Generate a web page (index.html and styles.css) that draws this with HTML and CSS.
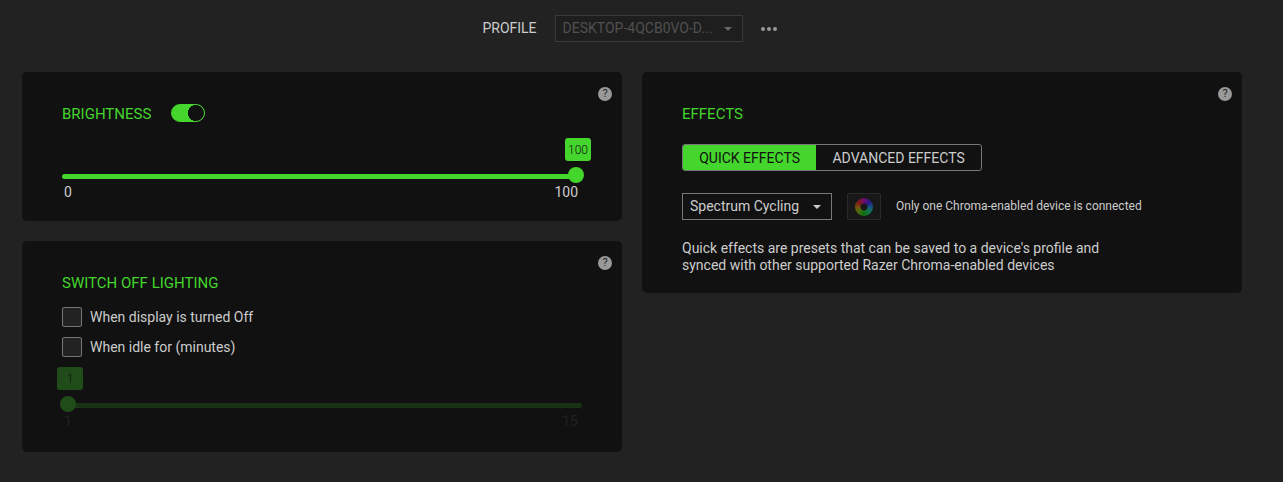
FILE: index.html
```html
<!DOCTYPE html>
<html lang="en">
<head>
<meta charset="utf-8">
<title>Lighting</title>
<link rel="stylesheet" href="styles.css">
</head>
<body>
<header class="profile-bar">
  <label for="profile">PROFILE</label>
  <div class="select profile-select">
    <select id="profile" disabled><option>DESKTOP-4QCB0VO-D...</option></select>
    <svg class="caret" viewBox="0 0 8 4" aria-hidden="true"><path d="M0 0h8L4 4z"/></svg>
  </div>
  <button class="more" type="button" aria-label="More options">
    <svg width="16" height="4" viewBox="0 0 16 4" aria-hidden="true"><circle cx="2" cy="2" r="2"/><circle cx="8" cy="2" r="2"/><circle cx="14" cy="2" r="2"/></svg>
  </button>
</header>
<main class="content">
  <div class="column">
    <section class="panel">
      <button class="help" type="button" aria-label="Brightness help">?</button>
      <div class="panel-head">
        <h2>BRIGHTNESS</h2>
        <input class="toggle" type="checkbox" role="switch" aria-label="Brightness on" checked>
      </div>
      <div class="slider" style="--position: 1">
        <output class="bubble" for="brightness">100</output>
        <input id="brightness" type="range" min="0" max="100" value="100" aria-label="Brightness">
        <div class="scale"><span>0</span><span>100</span></div>
      </div>
    </section>
    <section class="panel switch-off">
      <button class="help" type="button" aria-label="Switch off lighting help">?</button>
      <div class="panel-head"><h2>SWITCH OFF LIGHTING</h2></div>
      <div class="options">
        <label class="check"><input type="checkbox">When display is turned Off</label>
        <label class="check"><input type="checkbox">When idle for (minutes)</label>
      </div>
      <div class="slider disabled" style="--position: 0">
        <output class="bubble" for="idle">1</output>
        <input id="idle" type="range" min="1" max="15" value="1" aria-label="Idle minutes" disabled>
        <div class="scale"><span>1</span><span>15</span></div>
      </div>
    </section>
  </div>
  <section class="panel effects">
    <button class="help" type="button" aria-label="Effects help">?</button>
    <div class="panel-head"><h2>EFFECTS</h2></div>
    <div class="tabs">
      <button class="tab active" type="button" aria-pressed="true">QUICK EFFECTS</button>
      <button class="tab" type="button" aria-pressed="false">ADVANCED EFFECTS</button>
    </div>
    <div class="effect-row">
      <div class="select effect-select">
        <select aria-label="Effect"><option>Spectrum Cycling</option></select>
        <svg class="caret" viewBox="0 0 8 4" aria-hidden="true"><path d="M0 0h8L4 4z"/></svg>
      </div>
      <button class="sync" type="button" aria-label="Sync effect" disabled><span class="wheel"></span></button>
      <span class="note">Only one Chroma-enabled device is connected</span>
    </div>
    <p class="description">Quick effects are presets that can be saved to a device's profile and synced with other supported Razer Chroma-enabled devices</p>
  </section>
</main>
</body>
</html>
```
FILE: styles.css
```css
* {
  box-sizing: border-box;
}

body {
  margin: 0;
  background: #222;
  color: #ccc;
  font: 14px/17px Roboto, sans-serif;
}

button,
select,
input {
  margin: 0;
  font: inherit;
  color: inherit;
}

button {
  padding: 0;
  border: 0;
  background: none;
}

.profile-bar {
  display: flex;
  align-items: center;
  justify-content: center;
  gap: 18px;
  padding: 15px 41px 30px 22px;
}

.select {
  position: relative;
}

.select select {
  display: block;
  width: 100%;
  height: 27px;
  padding: 0 28px 0 7px;
  appearance: none;
  border: 1px solid #777;
  border-radius: 0;
  background: #111;
}

.caret {
  position: absolute;
  top: 12px;
  right: 11px;
  width: 8px;
  height: 4px;
  fill: #ccc;
  pointer-events: none;
}

.profile-select {
  width: 188px;
}

.profile-select select {
  border-color: #3a3a3a;
  background: #1e1e1e;
  color: #505050;
  opacity: 1;
}

.profile-select .caret {
  fill: #666;
}

.more {
  display: flex;
  padding: 8px 5px 8px 0;
  fill: #999;
}

.content {
  display: grid;
  grid-template-columns: 1fr 1fr;
  gap: 20px;
  align-items: start;
  padding: 0 41px 30px 22px;
}

.column {
  display: grid;
  gap: 20px;
}

.panel {
  position: relative;
  padding: 32px 40px 20px;
  border-radius: 5px;
  background: #111;
}

.switch-off {
  padding-bottom: 22px;
}

.effects {
  padding-bottom: 19px;
}

.help {
  position: absolute;
  top: 15px;
  right: 10px;
  width: 14px;
  height: 14px;
  border-radius: 50%;
  background: #999;
  color: #222;
  font-size: 11px;
  line-height: 14px;
  text-align: center;
}

.panel-head {
  display: flex;
  align-items: center;
  gap: 20px;
  height: 18px;
}

h2 {
  margin: 0;
  padding-top: 2px;
  color: #44d62c;
  font-size: 15px;
  font-weight: 400;
  line-height: 18px;
}

.toggle {
  width: 34px;
  height: 18px;
  appearance: none;
  border: 1px solid #44d62c;
  border-radius: 9px;
  background: #111;
}

.toggle:checked {
  background: radial-gradient(circle at 24px 8px, #111 8px, #44d62c 8px);
}

.slider {
  position: relative;
  margin-top: 16px;
  padding-top: 29px;
}

.slider::before {
  content: "";
  position: absolute;
  top: 36px;
  left: 0;
  right: 0;
  height: 5px;
  border-radius: 3px;
  background: #44d62c;
}

.bubble {
  position: absolute;
  top: 0;
  left: calc((100% - 12px) * var(--position) - 5px);
  width: 26px;
  height: 23px;
  border-radius: 3px;
  background: #44d62c;
  color: #111;
  font-size: 12px;
  font-weight: 300;
  line-height: 24px;
  text-align: center;
}

.slider input {
  display: block;
  position: relative;
  width: calc(100% + 4px);
  height: 16px;
  margin: 0 -2px;
  appearance: none;
  background: none;
}

.slider input::-webkit-slider-thumb {
  width: 16px;
  height: 16px;
  appearance: none;
  border-radius: 50%;
  background: #44d62c;
}

.scale {
  display: flex;
  justify-content: space-between;
  padding: 1px 4px 0 2px;
}

.disabled {
  margin-top: 10px;
}

.disabled .bubble {
  background: #204c19;
}

.disabled::before {
  background: #193114;
}

.disabled input::-webkit-slider-thumb {
  background: #204c19;
}

.disabled .scale {
  color: #222;
}

.options {
  display: grid;
  gap: 10px;
  margin-top: 16px;
}

.check {
  display: flex;
  align-items: center;
  gap: 8px;
}

.check input {
  width: 20px;
  height: 20px;
  appearance: none;
  border: 1px solid #777;
  border-radius: 2px;
  background: #222;
}

.check input:checked {
  background: #44d62c;
}

.tabs {
  display: flex;
  width: 300px;
  height: 27px;
  margin-top: 22px;
  overflow: hidden;
  border: 1px solid #777;
  border-radius: 3px;
}

.tab {
  flex: auto;
  padding-top: 2px;
}

.tab.active {
  background: #44d62c;
  color: #111;
}

.effect-row {
  display: flex;
  align-items: center;
  gap: 15px;
  margin-top: 22px;
}

.effect-select {
  width: 150px;
}

.sync {
  display: grid;
  place-items: center;
  width: 34px;
  height: 27px;
  border: 1px solid #2a2a2a;
  border-radius: 2px;
  background: #181818;
}

.wheel {
  width: 18px;
  height: 18px;
  border-radius: 50%;
  background:
    radial-gradient(circle, #181818 3px, transparent 4px),
    conic-gradient(#700c70, #251a86 50deg, #145c80 95deg, #10763f 140deg, #107010 185deg, #506c10 230deg, #785010 270deg, #7d1a15 310deg, #700c70);
}

.note {
  font-size: 12px;
}

.description {
  max-width: 440px;
  margin: 20px 0 0;
}
```
